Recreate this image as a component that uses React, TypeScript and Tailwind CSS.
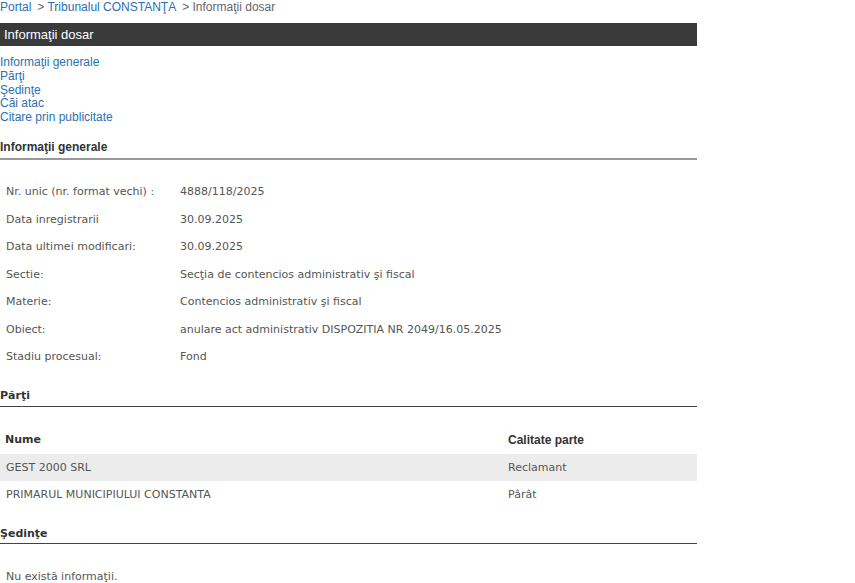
import React from 'react';

const info: [string, string][] = [
  ['Nr. unic (nr. format vechi) :', '4888/118/2025'],
  ['Data inregistrarii', '30.09.2025'],
  ['Data ultimei modificari:', '30.09.2025'],
  ['Sectie:', 'Secţia de contencios administrativ şi fiscal'],
  ['Materie:', 'Contencios administrativ şi fiscal'],
  ['Obiect:', 'anulare act administrativ DISPOZITIA NR 2049/16.05.2025'],
  ['Stadiu procesual:', 'Fond'],
];

const parti = [
  { nume: 'GEST 2000 SRL', calitate: 'Reclamant' },
  { nume: 'PRIMARUL MUNICIPIULUI CONSTANTA', calitate: 'Pârât' },
];

const data = "font-['DejaVu_Sans',Verdana,sans-serif] text-[11px] text-[#555]";

const App: React.FC = () => {
  return (
    <div className="w-[855px] h-[583px] overflow-hidden bg-white font-['Liberation_Sans',Arial,sans-serif]">
      <div className="w-[697px]">
        {/* breadcrumb */}
        <div className="h-[14px] text-[12px] leading-[14px] text-[#666]">
          <a className="text-[#2b6fb0]">Portal</a>
          <span className="ml-[6px]">&gt; </span>
          <a className="text-[#2b6fb0]">Tribunalul CONSTANŢA</a>
          <span className="ml-[6px]">&gt; Informaţii dosar</span>
        </div>
        <div className="mt-[9px] h-[23px] bg-[#3a3a3a] px-[4px] text-[13px] leading-[23px] text-white">
          Informaţii dosar
        </div>

        <div className="mt-[10px] flex flex-col text-[12px] leading-[13.75px] text-[#2a72ac]">
          <a>Informaţii generale</a>
          <a>Părţi</a>
          <a>Şedinţe</a>
          <a>Căi atac</a>
          <a>Citare prin publicitate</a>
        </div>

        <div className="mt-[15px] border-b-2 border-[#999] pb-[3px] text-[12px] font-bold leading-[15px] text-[#333]">
          Informaţii generale
        </div>

        <div className="mt-[19px] flex flex-col">
          {info.map(([k, v]) => (
            <div key={k} className={`flex h-[27.5px] items-center ${data}`}>
              <div className="w-[180px] pl-[6px]">{k}</div>
              <div>{v}</div>
            </div>
          ))}
        </div>

        <div className="mt-[17px] border-b border-[#444] pb-[3px] font-['DejaVu_Sans',Verdana,sans-serif] text-[11px] font-bold leading-[15px] text-[#333]">
          Părţi
        </div>

        <div className="mt-[19px]">
          <div className="flex h-[28px] items-center font-['DejaVu_Sans',Verdana,sans-serif] text-[11px] font-bold text-[#333]">
            <div className="w-[508px] pl-[5px]">Nume</div>
            <div className="font-['Liberation_Sans',Arial,sans-serif] text-[12px]">Calitate parte</div>
          </div>
          {parti.map((p, i) => (
            <div key={p.nume} className={`flex h-[27px] items-center ${data} ${i === 0 ? 'bg-[#ececec]' : ''}`}>
              <div className="w-[508px] pl-[6px]">{p.nume}</div>
              <div>{p.calitate}</div>
            </div>
          ))}
        </div>

        <div className="mt-[18px] border-b border-[#444] pb-[2px] font-['DejaVu_Sans',Verdana,sans-serif] text-[11px] font-bold leading-[15px] text-[#333]">
          Şedinţe
        </div>

        <div className={`mt-[25px] pl-[6px] ${data}`}>Nu există informaţii.</div>
      </div>
    </div>
  );
};

export default App;
